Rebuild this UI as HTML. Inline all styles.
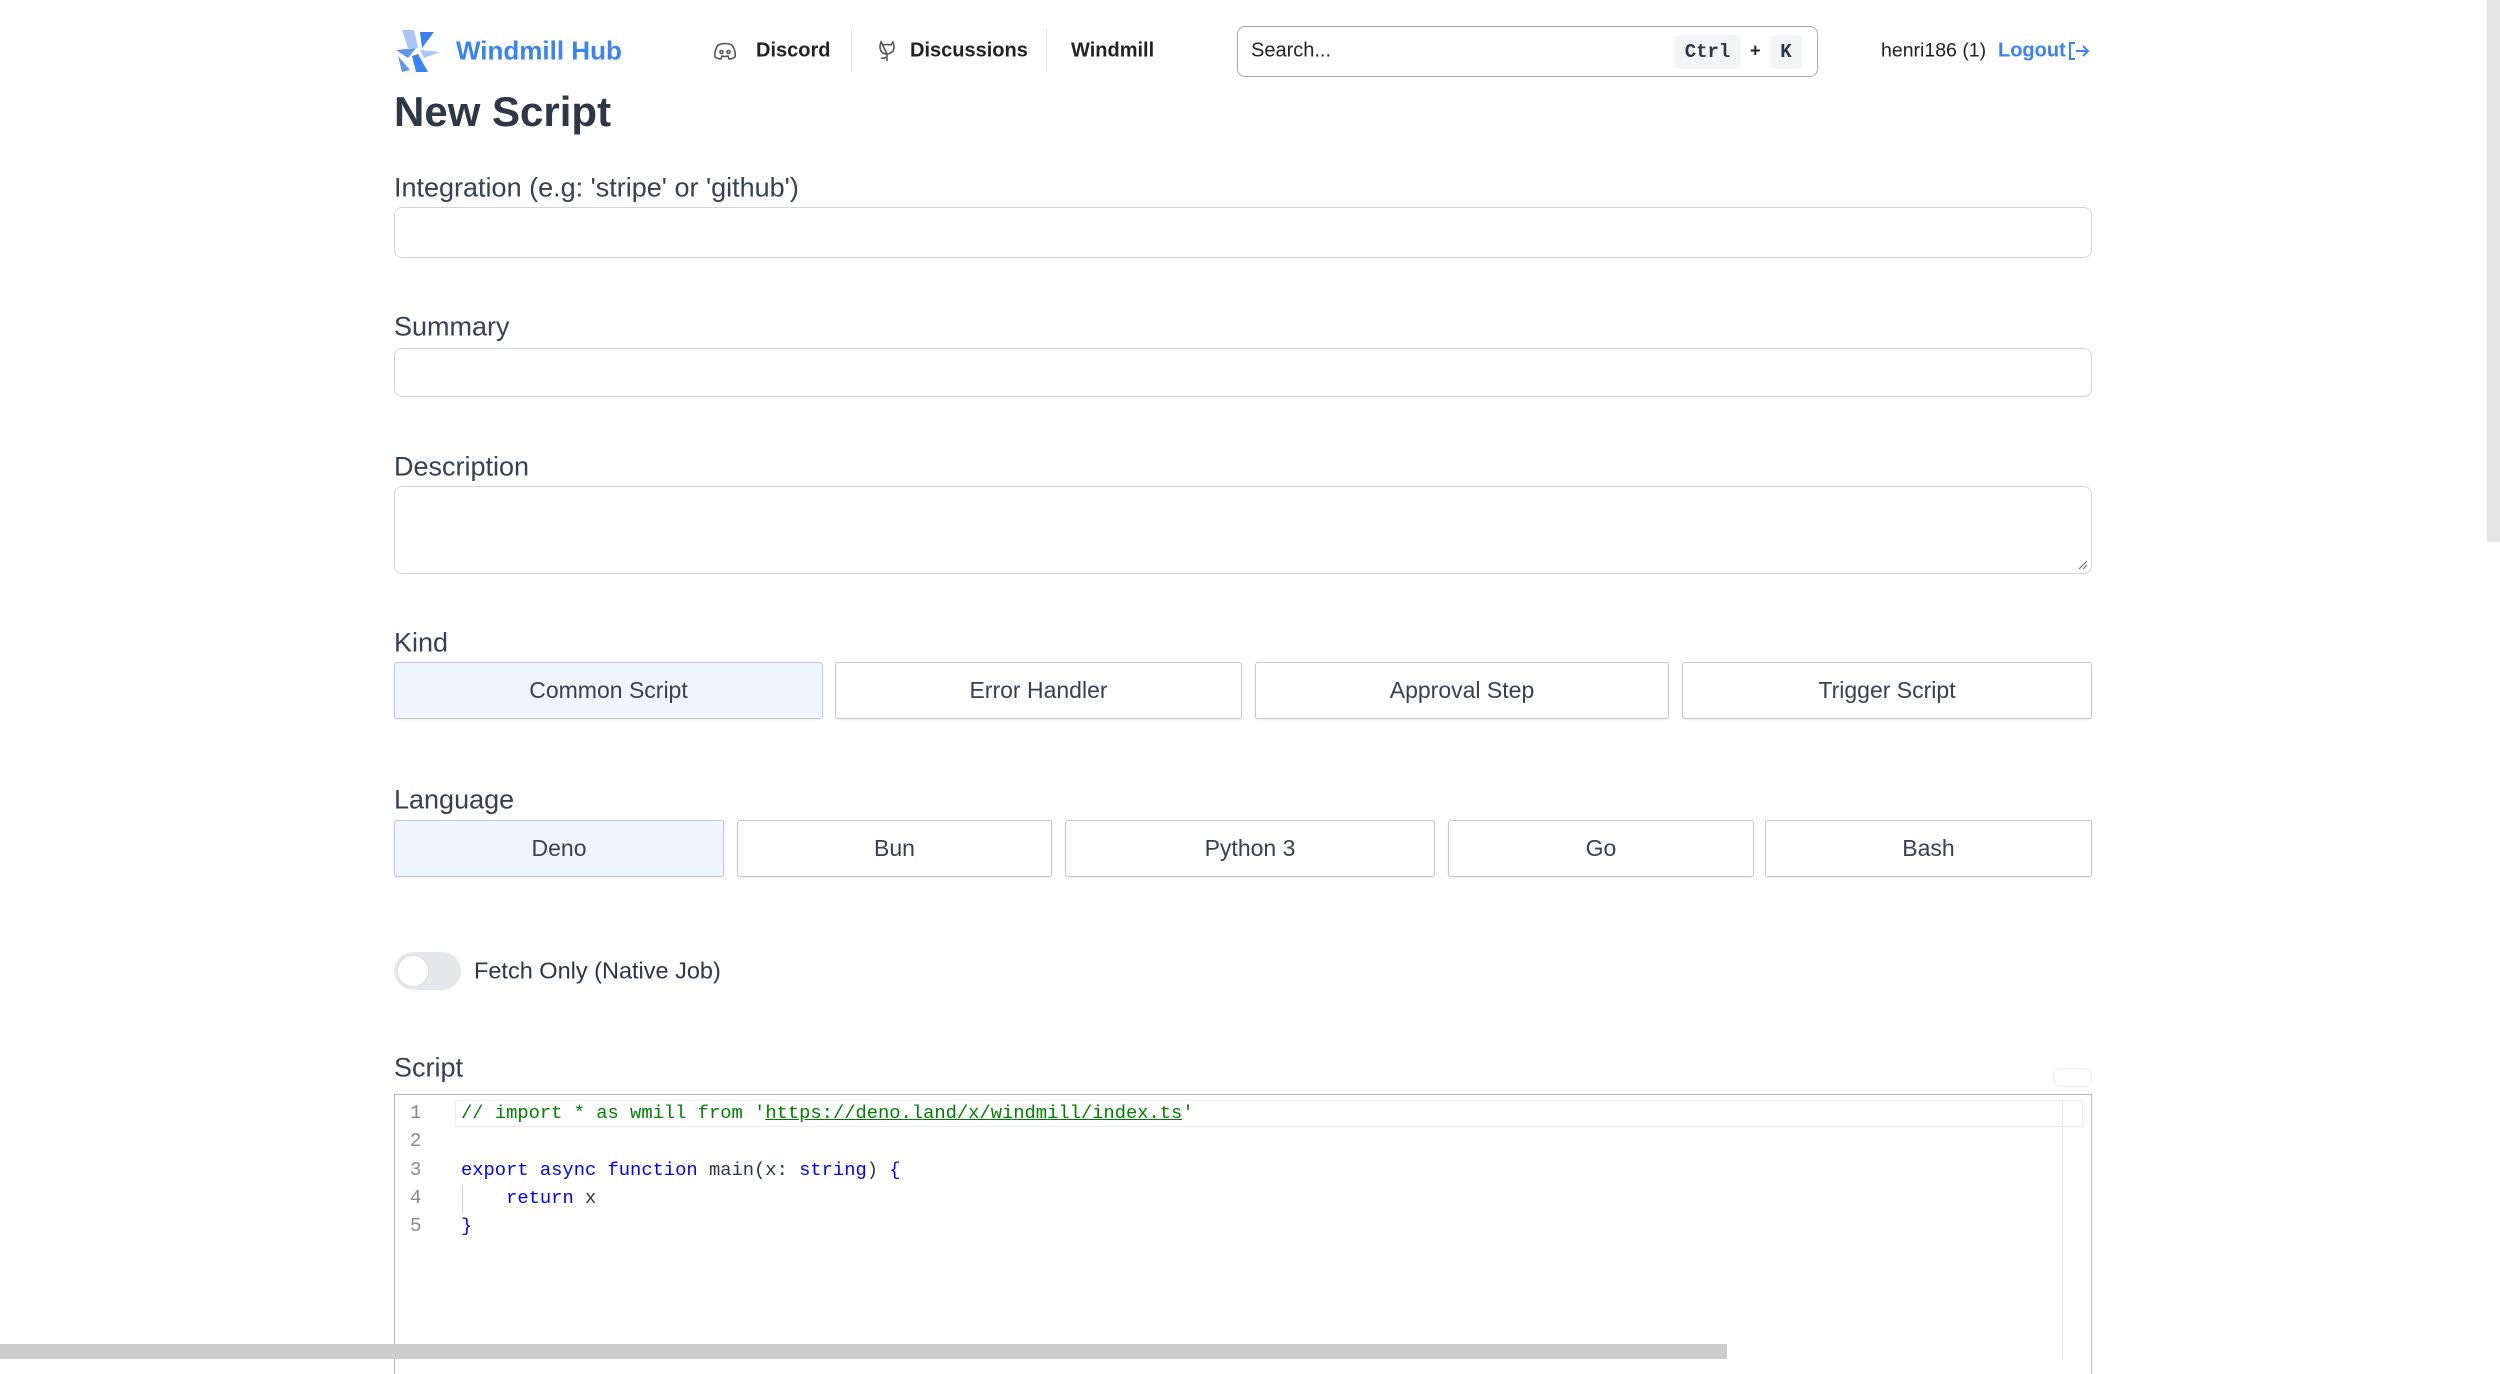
<!DOCTYPE html>
<html><head><meta charset="utf-8"><style>
*{box-sizing:border-box;margin:0;padding:0}
body{width:2500px;height:1359px;overflow:hidden;background:#fff;font-family:"Liberation Sans",sans-serif;color:#2d3748;position:relative}
.a{position:absolute}
.lbl{position:absolute;left:394px;font-size:27px;color:#374151;transform:translateY(-50%)}
.inp{position:absolute;left:394px;width:1698px;border:1.5px solid #d1d5db;border-radius:8px;background:#fff}
.btn{position:absolute;border:1.5px solid #c4c7cc;border-radius:3px;background:#fff;display:flex;align-items:center;justify-content:center;font-size:23px;color:#374151;box-shadow:0 1px 2px rgba(0,0,0,.08)}
.sel{background:#eef5fe}
.nav{position:absolute;top:51px;transform:translateY(-50%);font-size:20px;font-weight:bold;color:#222}
.code{position:absolute;left:461px;font-family:"Liberation Mono","DejaVu Sans Mono",monospace;font-size:18.8px;white-space:pre;transform:translateY(-50%)}
.ln{position:absolute;left:410px;font-family:"Liberation Mono",monospace;font-size:19px;color:#888;transform:translateY(-50%)}
.kw{color:#0000ff}
</style></head><body>
<svg class="a" style="left:394px;top:28px" width="48" height="46" viewBox="0 0 48 46">
<path d="M8 2 L20 2 L24 20 L14 20 Z" fill="#a9c6f7"/>
<path d="M2 22 L22 20 L14 30 Z" fill="#5e95ee"/>
<path d="M26 22 L46 24 L30 30 Z" fill="#a9c6f7"/>
<path d="M24 26 L34 44 L22 44 L18 28 Z" fill="#3b82f6"/>
<path d="M26 4 L40 4 L28 20 Z" fill="#3b82f6"/>
<path d="M4 28 L16 42 L8 44 Z" fill="#5e95ee"/>
</svg>
<div class="a" style="left:456px;top:51px;transform:translateY(-50%);font-size:26px;font-weight:bold;color:#3b82f6">Windmill Hub</div>
<svg class="a" style="left:713px;top:42px" width="24" height="18" viewBox="0 0 24 18" fill="none" stroke="#555" stroke-width="1.6"><path d="M5 3 Q12 0 19 3 Q23 9 22 15 Q19 17 16 17 L15 14 Q12 15 9 14 L8 17 Q5 17 2 15 Q1 9 5 3Z"/><circle cx="8.5" cy="10" r="1.5"/><circle cx="15.5" cy="10" r="1.5"/></svg>
<div class="nav" style="left:756px">Discord</div>
<div class="a" style="left:851px;top:28px;width:1px;height:44px;background:#e5e7eb"></div>
<svg class="a" style="left:877px;top:39px" width="20" height="24" viewBox="0 0 20 24" fill="none" stroke="#555" stroke-width="1.6"><path d="M4 3 L6 6 Q10 5 14 6 L16 3 Q18 8 16 12 Q13 15 10 15 L10 22 M10 15 Q6 15 4 12 Q2 8 4 3Z M4 19 Q7 20 9 18"/></svg>
<div class="nav" style="left:910px">Discussions</div>
<div class="a" style="left:1046px;top:28px;width:1px;height:44px;background:#e5e7eb"></div>
<div class="nav" style="left:1071px">Windmill</div>
<div class="a" style="left:1237px;top:26px;width:581px;height:51px;border:1.5px solid #aaa;border-radius:8px"></div>
<div class="nav" style="left:1251px;font-weight:normal;color:#222">Search...</div>
<div class="a" style="left:1674px;top:35px;width:67px;height:34px;background:#f3f4f6;border-radius:6px;font-family:'Liberation Mono',monospace;font-weight:bold;font-size:19px;display:flex;align-items:center;justify-content:center">Ctrl</div>
<div class="nav" style="left:1750px;font-size:18px">+</div>
<div class="a" style="left:1770px;top:35px;width:32px;height:34px;background:#f3f4f6;border-radius:6px;font-family:'Liberation Mono',monospace;font-weight:bold;font-size:19px;display:flex;align-items:center;justify-content:center">K</div>
<div class="nav" style="left:1881px;font-weight:normal;color:#222;font-size:19.5px">henri186 (1)</div>
<div class="nav" style="left:1998px;color:#3b82f6">Logout</div>
<svg class="a" style="left:2068px;top:41px" width="22" height="20" viewBox="0 0 22 20" fill="none" stroke="#3b82f6" stroke-width="2"><path d="M7 2 H2 V18 H7 M8 10 H20 M15 5 L20 10 L15 15"/></svg>

<div class="a" style="left:394px;top:112px;transform:translateY(-50%);font-size:42px;font-weight:bold;color:#2d3748">New Script</div>

<div class="lbl" style="top:188px">Integration (e.g: 'stripe' or 'github')</div>
<div class="inp" style="top:207px;height:51px"></div>
<div class="lbl" style="top:327px">Summary</div>
<div class="inp" style="top:348px;height:49px"></div>
<div class="lbl" style="top:467px">Description</div>
<div class="inp" style="top:486px;height:88px"></div>
<svg class="a" style="left:2078px;top:560px" width="10" height="10"><path d="M1 9 L9 1 M5 9 L9 5" stroke="#666"/></svg>

<div class="lbl" style="top:643px">Kind</div>
<div class="btn sel" style="left:394px;top:662px;width:429px;height:57px">Common Script</div>
<div class="btn" style="left:835px;top:662px;width:407px;height:57px">Error Handler</div>
<div class="btn" style="left:1255px;top:662px;width:414px;height:57px">Approval Step</div>
<div class="btn" style="left:1682px;top:662px;width:410px;height:57px">Trigger Script</div>

<div class="lbl" style="top:800px">Language</div>
<div class="btn sel" style="left:394px;top:820px;width:330px;height:57px">Deno</div>
<div class="btn" style="left:737px;top:820px;width:315px;height:57px">Bun</div>
<div class="btn" style="left:1065px;top:820px;width:370px;height:57px">Python 3</div>
<div class="btn" style="left:1448px;top:820px;width:306px;height:57px">Go</div>
<div class="btn" style="left:1765px;top:820px;width:327px;height:57px">Bash</div>

<div class="a" style="left:394px;top:952px;width:67px;height:38px;border-radius:19px;background:#e5e7eb"></div>
<div class="a" style="left:397px;top:955px;width:32px;height:32px;border-radius:50%;background:#fff;border:1px solid #ddd"></div>
<div class="a" style="left:474px;top:971px;transform:translateY(-50%);font-size:23.5px;color:#2d3748">Fetch Only (Native Job)</div>

<div class="lbl" style="top:1068px">Script</div>
<div class="a" style="left:2053px;top:1068px;width:39px;height:19px;border:1px solid #eee;border-radius:8px"></div>
<div class="a" style="left:394px;top:1094px;width:1698px;height:280px;border:1.5px solid #bbb;border-bottom:none"></div>
<div class="a" style="left:2062px;top:1100px;width:1px;height:260px;background:#e5e5e5"></div>
<div class="a" style="left:455px;top:1100px;width:1628px;height:27px;border:1.5px solid #eee"></div>
<div class="ln" style="top:1113px">1</div>
<div class="ln" style="top:1141px">2</div>
<div class="ln" style="top:1170px">3</div>
<div class="ln" style="top:1198px">4</div>
<div class="ln" style="top:1226px">5</div>
<div class="code" style="top:1113px;color:#008000">// import * as wmill from '<span style="text-decoration:underline">https://deno.land/x/windmill/index.ts</span>'</div>
<div class="code" style="top:1170px"><span class="kw">export async function</span> main(x: <span class="kw">string</span>) <span class="kw">{</span></div>
<div class="a" style="left:462px;top:1185px;width:1px;height:28px;background:#ccc"></div>
<div class="code" style="top:1198px">    <span class="kw">return</span> x</div>
<div class="code" style="top:1226px"><span class="kw">}</span></div>

<div class="a" style="left:0;top:1344px;width:1727px;height:15px;background:#cdcdcd"></div>
<div class="a" style="left:2487px;top:0;width:13px;height:542px;background:#e4e4e4"></div>
</body></html>
